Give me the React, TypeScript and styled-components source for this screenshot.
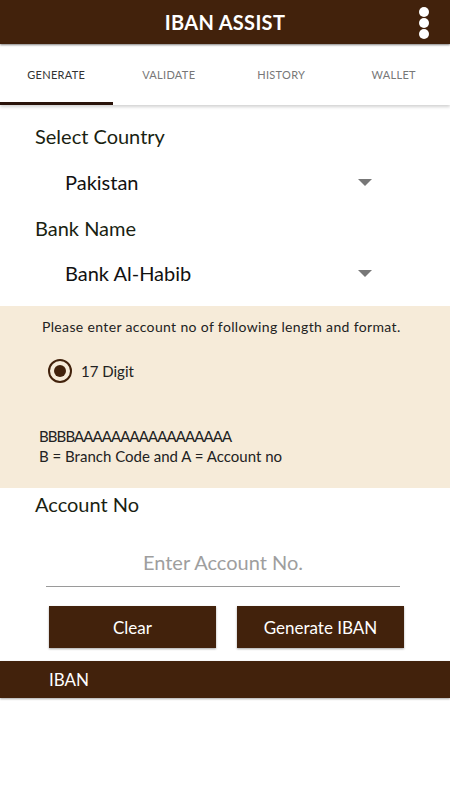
import React from "react";
import styled, { createGlobalStyle } from "styled-components";

const BROWN = "#42220c";
const BEIGE = "#f6ebd9";

const Global = createGlobalStyle`
  html, body { margin: 0; padding: 0; background: #fff; }
  body { font-family: Lato, "Open Sans", sans-serif; }
  * { box-sizing: border-box; }
`;

const Page = styled.div`
  width: 450px;
  min-height: 800px;
  background: #fff;
  display: flex;
  flex-direction: column;
`;

const Header = styled.header`
  height: 44px;
  background: ${BROWN};
  display: flex;
  align-items: center;
  justify-content: center;
  position: relative;
  box-shadow: 0 1px 2px rgba(0,0,0,0.5);
  z-index: 2;
`;

const Title = styled.h1`
  margin: 0;
  color: #fff;
  font-size: 20px;
  font-weight: 700;
  letter-spacing: 0.3px;
`;

const Kebab = styled.div`
  position: absolute;
  right: 21px;
  top: 7px;
  display: flex;
  flex-direction: column;
  gap: 1px;
`;

const Dot = styled.span`
  width: 10px;
  height: 10px;
  border-radius: 50%;
  background: #fff;
`;

const Tabs = styled.nav`
  height: 61px;
  display: grid;
  grid-template-columns: repeat(4, 1fr);
  background: #fff;
  box-shadow: 0 2px 3px rgba(0,0,0,0.18);
  z-index: 1;
`;

const Tab = styled.div<{ $active?: boolean }>`
  display: flex;
  align-items: center;
  justify-content: center;
  font-size: 11px;
  letter-spacing: 0.3px;
  color: ${(p) => (p.$active ? "#333" : "#777")};
  border-bottom: 3px solid ${(p) => (p.$active ? "#2a130a" : "transparent")};
  padding-top: 3px;
`;

const Section = styled.section`
  padding: 15px 0 0 35px;
  display: flex;
  flex-direction: column;
`;

const Label = styled.div`
  font-size: 20px;
  color: #1a1f12;
  height: 32px;
  display: flex;
  align-items: center;
`;

const Select = styled.div<{ $h?: number }>`
  height: ${(p) => p.$h ?? 60}px;
  display: flex;
  align-items: center;
  justify-content: space-between;
  padding: 0 78px 0 30px;
  font-size: 20px;
  color: #111;
`;

const Caret = styled.span`
  width: 0;
  height: 0;
  border-left: 7px solid transparent;
  border-right: 7px solid transparent;
  border-top: 7px solid #777;
`;

const Panel = styled.section`
  margin-top: 4px;
  background: ${BEIGE};
  height: 182px;
  padding: 12px 0 0 39px;
  display: flex;
  flex-direction: column;
`;

const Note = styled.div`
  font-size: 14px;
  letter-spacing: 0.35px;
  color: #222;
  padding-left: 3px;
`;

const RadioRow = styled.label`
  display: flex;
  align-items: center;
  gap: 9px;
  margin: 24px 0 0 9px;
  font-size: 15px;
  color: #222;
`;

const RadioOuter = styled.span`
  width: 24px;
  height: 24px;
  border-radius: 50%;
  border: 2.5px solid ${BROWN};
  display: flex;
  align-items: center;
  justify-content: center;
`;

const RadioInner = styled.span`
  width: 12px;
  height: 12px;
  border-radius: 50%;
  background: ${BROWN};
`;

const Format = styled.div`
  margin-top: 43px;
  font-size: 15px;
  line-height: 20px;
  color: #222;
`;

const Pattern = styled.span`
  letter-spacing: -0.9px;
`;

const AccountSection = styled.section`
  padding: 1px 0 0 35px;
`;

const AccountLabel = styled(Label)`
  height: 30px;
`;

const InputWrap = styled.div`
  margin: 18px 50px 0 46px;
  border-bottom: 1.5px solid #9a9a9a;
  height: 50px;
  display: flex;
  align-items: center;
  justify-content: center;
`;

const Input = styled.input`
  border: none;
  outline: none;
  background: transparent;
  width: 100%;
  text-align: center;
  font-family: inherit;
  font-size: 20px;
  &::placeholder { color: #9e9e9e; }
`;

const Buttons = styled.div`
  display: grid;
  grid-template-columns: 167px 167px;
  column-gap: 21px;
  padding: 19px 0 0 49px;
`;

const Button = styled.button`
  height: 42px;
  background: ${BROWN};
  color: #fff;
  border: none;
  font-family: inherit;
  font-size: 17px;
  box-shadow: 0 1px 2px rgba(0,0,0,0.35);
`;

const IbanBar = styled.div`
  margin-top: 13px;
  height: 37px;
  background: ${BROWN};
  color: #fff;
  font-size: 17px;
  display: flex;
  align-items: center;
  padding-left: 49px;
  box-shadow: 0 1px 2px rgba(0,0,0,0.35);
`;

export default function App() {
  return (
    <Page>
      <Global />
      <Header>
        <Title>IBAN ASSIST</Title>
        <Kebab>
          <Dot />
          <Dot />
          <Dot />
        </Kebab>
      </Header>
      <Tabs>
        <Tab $active>GENERATE</Tab>
        <Tab>VALIDATE</Tab>
        <Tab>HISTORY</Tab>
        <Tab>WALLET</Tab>
      </Tabs>
      <Section>
        <Label>Select Country</Label>
        <Select>
          <span>Pakistan</span>
          <Caret />
        </Select>
        <Label>Bank Name</Label>
        <Select $h={58}>
          <span>Bank Al-Habib</span>
          <Caret />
        </Select>
      </Section>
      <Panel>
        <Note>Please enter account no of following length and format.</Note>
        <RadioRow>
          <RadioOuter>
            <RadioInner />
          </RadioOuter>
          17 Digit
        </RadioRow>
        <Format>
          <Pattern>BBBBAAAAAAAAAAAAAAAAA</Pattern>
          <br />B = Branch Code and A = Account no
        </Format>
      </Panel>
      <AccountSection>
        <AccountLabel>Account No</AccountLabel>
      </AccountSection>
      <InputWrap>
        <Input placeholder="Enter Account No." />
      </InputWrap>
      <Buttons>
        <Button>Clear</Button>
        <Button>Generate IBAN</Button>
      </Buttons>
      <IbanBar>IBAN</IbanBar>
    </Page>
  );
}
